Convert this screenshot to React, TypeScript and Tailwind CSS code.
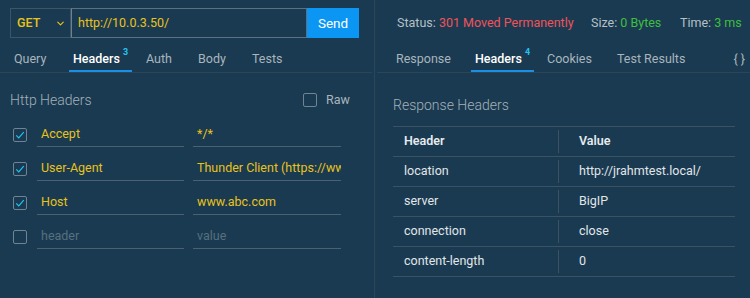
import { ChevronDown } from "lucide-react"

const reqHeaders = [
  { on: true, name: "Accept", value: "*/*" },
  { on: true, name: "User-Agent", value: "Thunder Client (https://www" },
  { on: true, name: "Host", value: "www.abc.com" },
]

const resHeaders = [
  ["location", "http://jrahmtest.local/"],
  ["server", "BigIP"],
  ["connection", "close"],
  ["content-length", "0"],
]

function Check({ on }: { on: boolean }) {
  return (
    <span className="grid h-[14px] w-[14px] shrink-0 place-items-center rounded-[2px] border border-[#6f8392]">
      {on && (
        <svg viewBox="0 0 12 12" className="h-[10px] w-[10px]" fill="none">
          <path d="M1.5 6.5l3 3 6-7" stroke="#22c4f2" strokeWidth="1.4" />
        </svg>
      )}
    </span>
  )
}

function Tab({ label, count, active, w }: { label: string; count?: number; active?: boolean; w: string }) {
  return (
    <div className={`flex h-full shrink-0 ${w}`}>
      <div className={`relative flex h-full items-center px-[4px] pt-[9px] ${active ? "text-white" : "text-[#a9b5bd]"}`}>
        <span className={active ? "font-medium" : ""}>{label}</span>
        {count !== undefined && (
          <sup className="ml-[3px] -mt-[6px] text-[9px] font-bold text-[#26c2f3]">{count}</sup>
        )}
        {active && <span className="absolute bottom-0 left-0 right-0 h-[2px] bg-[#1b8ee6]" />}
      </div>
    </div>
  )
}

export default function App() {
  return (
    <div className="flex h-[298px] w-[750px] overflow-hidden bg-[#1a3a51] font-['Roboto',sans-serif] text-[12.5px]">
      {/* request side */}
      <div className="flex w-[374px] shrink-0 flex-col">
        <div className="mt-[8px] flex h-[30px] pl-[10px]">
          <div className="flex w-[61px] items-center justify-between border border-[#3c5567] pl-[6px] pr-[4px] text-[#e9c21b]">
            <span className="text-[12.5px] font-medium">GET</span>
            <ChevronDown className="h-[11px] w-[11px]" strokeWidth={2.5} />
          </div>
          <div className="flex w-[236px] items-center border border-[#5b7181] border-l-[#6d8190] pl-[6px] text-[#e9c21b]">
            http://10.0.3.50/
          </div>
          <button className="w-[52px] bg-[#0b96f3] text-[13.5px] text-white">Send</button>
        </div>

        <div className="mr-[2px] flex h-[35px] border-b border-[#2d4657] pl-[10px]">
          <Tab label="Query" w="w-[59px]" />
          <Tab label="Headers" count={3} active w="w-[73px]" />
          <Tab label="Auth" w="w-[52px]" />
          <Tab label="Body" w="w-[54px]" />
          <Tab label="Tests" w="w-[60px]" />
        </div>

        <div className="mt-[16px] flex h-[22px] items-center justify-between pl-[10px] pr-[24px]">
          <h2 className="text-[14px] font-light text-[#a3b1ba]">Http Headers</h2>
          <label className="flex items-center gap-[9px] text-[#a9b5bd]">
            <Check on={false} />
            Raw
          </label>
        </div>

        <div className="mt-[11px] flex flex-col gap-[9px] pl-[13px] pr-[34px]">
          {reqHeaders.map((h) => (
            <div key={h.name} className="flex h-[25px] items-center gap-[10px]">
              <Check on={h.on} />
              <div className="flex h-full flex-1 gap-[9px]">
                <div className="flex w-[147px] items-center border-b border-[#4b6172] pl-[4px] text-[#e9c21b]">{h.name}</div>
                <div className="flex w-[148px] items-center overflow-hidden whitespace-nowrap border-b border-[#4b6172] pl-[4px] text-[#e9c21b]">
                  {h.value}
                </div>
              </div>
            </div>
          ))}
          <div className="flex h-[25px] items-center gap-[10px]">
            <Check on={false} />
            <div className="flex h-full flex-1 gap-[9px]">
              <div className="flex w-[147px] items-center border-b border-[#4b6172] pl-[4px] text-[#56707f]">header</div>
              <div className="flex w-[148px] items-center border-b border-[#4b6172] pl-[4px] text-[#56707f]">value</div>
            </div>
          </div>
        </div>
      </div>

      {/* response side */}
      <div className="flex flex-1 flex-col border-l border-[#2d4657]">
        <div className="mt-[8px] flex h-[30px] items-center whitespace-nowrap pl-[22px] text-[#b5c0c7]">
          <div className="w-[194px] shrink-0">
            Status: <span className="text-[#f0535a]">301 Moved Permanently</span>
          </div>
          <div className="w-[89px] shrink-0">
            Size: <span className="text-[#3fbf3f]">0 Bytes</span>
          </div>
          <div>
            Time: <span className="text-[#3fbf3f]">3 ms</span>
          </div>
        </div>

        <div className="ml-[2px] flex h-[35px] border-b border-[#2d4657] pl-[15px] pr-[5px]">
          <Tab label="Response" w="w-[79px]" />
          <Tab label="Headers" count={4} active w="w-[72px]" />
          <Tab label="Cookies" w="w-[70px]" />
          <Tab label="Test Results" w="w-[90px]" />
          <div className="ml-auto flex items-center pt-[9px] text-[#a9b5bd]">{"{ }"}</div>
        </div>

        <h2 className="ml-[18px] mt-[21px] flex h-[22px] items-center text-[14px] font-light text-[#a3b1ba]">
          Response Headers
        </h2>

        <div className="ml-[18px] mr-[15px] mt-[10px] border-t border-[#3a5264]">
          <div className="flex h-[30px] border-b border-[#3a5264] font-semibold text-[#e7ebee]">
            <div className="flex w-[165px] items-center pl-[11px]">Header</div>
            <div className="my-[3px] w-px bg-[#3a5264]" />
            <div className="flex flex-1 items-center pl-[20px]">Value</div>
          </div>
          {resHeaders.map(([k, v]) => (
            <div key={k} className="flex h-[30px] border-b border-[#3a5264] text-[#e1e6e9]">
              <div className="flex w-[165px] items-center pl-[11px]">{k}</div>
              <div className="my-[3px] w-px bg-[#3a5264]" />
              <div className="flex flex-1 items-center pl-[20px]">{v}</div>
            </div>
          ))}
        </div>
      </div>
    </div>
  )
}
